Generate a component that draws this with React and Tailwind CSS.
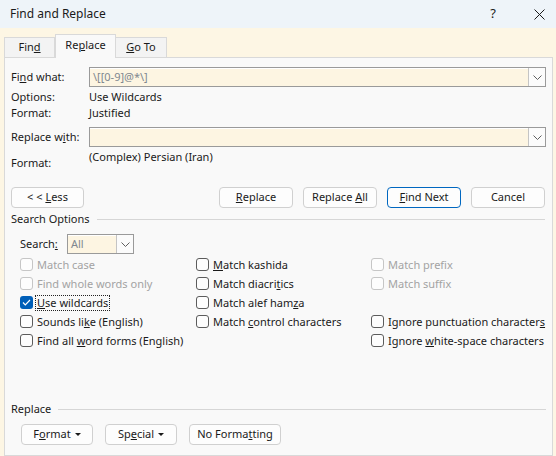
import React from 'react';

const font = { fontFamily: '"Noto Sans", "Open Sans", sans-serif' };

const Chevron = () => (
    <svg width="9" height="5" viewBox="0 0 9 5" fill="none">
        <polyline points="0.5,0.5 4.5,4.5 8.5,0.5" stroke="#5f5f5f" strokeWidth="1" />
    </svg>
);

const Caret = () => (
    <svg width="6" height="3" viewBox="0 0 6 3" className="ml-[4px]">
        <polygon points="0,0 6,0 3,3" fill="#1a1a1a" />
    </svg>
);

const ComboBox = ({ value, className = '' }) => (
    <div className={`flex h-[20px] border border-[#9a9a9a] bg-[#fdf5e2] ${className}`}>
        <div className="flex-1 flex items-center pl-[3px] text-[#808890] border-t border-t-white">{value}</div>
        <div className="w-[17px] h-full flex items-center justify-center bg-[#fbfbfb] border-l border-[#c4c4c4]">
            <Chevron />
        </div>
    </div>
);

const Btn = ({ children, w = 'w-[74px]', primary }) => (
    <div
        className={`${w} h-[21px] flex items-center justify-center rounded-[4px] bg-[#fdfdfd] border ${
            primary ? 'border-[#0067c0]' : 'border-[#d0d0d0]'
        }`}
    >
        {children}
    </div>
);

const Check = ({ children, disabled, checked, focus }) => (
    <div className={`flex items-center h-[19px] whitespace-nowrap ${disabled ? 'text-[#a3a3a3]' : ''}`}>
        {checked ? (
            <div className="w-[13px] h-[13px] shrink-0 rounded-[3px] bg-[#005fb8] flex items-center justify-center">
                <svg width="9" height="7" viewBox="0 0 9 7" fill="none">
                    <polyline points="1,3.5 3.3,5.8 8,1" stroke="white" strokeWidth="1.2" />
                </svg>
            </div>
        ) : (
            <div
                className={`w-[13px] h-[13px] shrink-0 rounded-[3px] bg-[#fdfdfd] border ${
                    disabled ? 'border-[#c6c6c6]' : 'border-[#5c5c5c]'
                }`}
            />
        )}
        <span className={`ml-[3px] px-px leading-[14px] ${focus ? 'outline-1 outline-dotted outline-[#222]' : ''}`}>
            {children}
        </span>
    </div>
);

const SectionHeader = ({ title }) => (
    <div className="flex items-center h-[16px]">
        <span>{title}</span>
        <div className="flex-1 h-px bg-[#d6d6d6] ml-[7px]" />
    </div>
);

export default function App() {
    return (
        <div style={font} className="w-[556px] h-[456px] flex flex-col overflow-hidden text-[11px] text-[#1a1a1a] bg-[#fdf6e4]">
            {/* Title bar */}
            <div className="h-[28px] flex items-center bg-[#eef4f9] pl-[10px] shrink-0">
                <span className="text-[12px]">Find and Replace</span>
                <span className="ml-auto text-[13px] mr-[38px]">?</span>
                <svg width="11" height="11" viewBox="0 0 11 11" className="mr-[11px]">
                    <path d="M0.5 0.5 L10.5 10.5 M10.5 0.5 L0.5 10.5" stroke="#1a1a1a" strokeWidth="1" />
                </svg>
            </div>

            <div className="flex-1 flex flex-col pt-[6px] pl-[4px] pr-[3px]">
                {/* Tabs */}
                <div className="flex items-end h-[23px] relative z-10">
                    <div className="w-[51px] h-[20px] flex items-center justify-center bg-[#f3f3f3] border border-[#d9d9d9] border-b-0">
                        <span>Fin<u>d</u></span>
                    </div>
                    <div className="w-[61px] h-[24px] -mb-px flex items-center justify-center bg-[#f9f9f9] border border-[#d9d9d9] border-b-0 pb-[2px]">
                        <span>Re<u>p</u>lace</span>
                    </div>
                    <div className="w-[51px] h-[20px] flex items-center justify-center bg-[#f3f3f3] border border-[#d9d9d9] border-b-0 border-l-0">
                        <span><u>G</u>o To</span>
                    </div>
                </div>

                {/* Panel */}
                <div className="flex-1 flex flex-col bg-[#f9f9f9] border border-[#d9d9d9] pl-[6px] pr-[6px]">
                    <div className="flex items-center mt-[9px]">
                        <span className="w-[78px]">Fi<u>n</u>d what:</span>
                        <ComboBox value="\[[0-9]@*\]" className="flex-1" />
                    </div>
                    <div className="flex items-center h-[16px] mt-[2px]">
                        <span className="w-[78px]">Options:</span>
                        <span>Use Wildcards</span>
                    </div>
                    <div className="flex items-center h-[16px]">
                        <span className="w-[78px]">Format:</span>
                        <span>Justified</span>
                    </div>

                    <div className="flex items-center mt-[6px]">
                        <span className="w-[78px]">Replace w<u>i</u>th:</span>
                        <ComboBox value="" className="flex-1" />
                    </div>
                    <div className="flex items-start">
                        <span className="w-[78px] mt-[8px] h-[16px] flex items-center">Format:</span>
                        <span className="mt-[2px] h-[16px] flex items-center">(Complex) Persian (Iran)</span>
                    </div>

                    {/* Buttons */}
                    <div className="flex items-center mt-[16px] pr-px gap-[10px]">
                        <Btn w="w-[73px]">
                            <span>&lt; &lt; <u>L</u>ess</span>
                        </Btn>
                        <div className="flex-1" />
                        <Btn>
                            <span><u>R</u>eplace</span>
                        </Btn>
                        <Btn>
                            <span>Replace <u>A</u>ll</span>
                        </Btn>
                        <Btn primary>
                            <span><u>F</u>ind Next</span>
                        </Btn>
                        <Btn>
                            <span>Cancel</span>
                        </Btn>
                    </div>

                    {/* Search options */}
                    <div className="mt-[3px] pr-[1px]">
                        <SectionHeader title="Search Options" />
                    </div>
                    <div className="flex items-center mt-[7px] pl-[9px]">
                        <span className="w-[47px]">Search<u>:</u></span>
                        <ComboBox value="All" className="w-[67px]" />
                    </div>

                    <div className="grid grid-cols-[176px_175px_1fr] mt-px pl-[9px]">
                        <div className="flex flex-col">
                            <Check disabled>Match case</Check>
                            <Check disabled>Find whole words only</Check>
                            <Check checked focus>
                                <u>U</u>se wildcards
                            </Check>
                            <Check>
                                Sounds li<u>k</u>e (English)
                            </Check>
                            <Check>
                                Find all <u>w</u>ord forms (English)
                            </Check>
                        </div>
                        <div className="flex flex-col">
                            <Check>
                                <u>M</u>atch kashida
                            </Check>
                            <Check>
                                Match diacri<u>t</u>ics
                            </Check>
                            <Check>
                                Match alef ham<u>z</u>a
                            </Check>
                            <Check>
                                Match <u>c</u>ontrol characters
                            </Check>
                        </div>
                        <div className="flex flex-col">
                            <Check disabled>Match prefix</Check>
                            <Check disabled>Match suffix</Check>
                            <div className="h-[19px]" />
                            <Check>
                                Ignore punctuation character<u>s</u>
                            </Check>
                            <Check>
                                Ignore <u>w</u>hite-space characters
                            </Check>
                        </div>
                    </div>

                    {/* Replace section */}
                    <div className="mt-[51px]">
                        <SectionHeader title="Replace" />
                    </div>
                    <div className="flex items-center mt-[7px] pl-[10px] gap-[12px]">
                        <Btn w="w-[72px]">
                            <span>F<u>o</u>rmat</span>
                            <Caret />
                        </Btn>
                        <Btn w="w-[72px]">
                            <span>Sp<u>e</u>cial</span>
                            <Caret />
                        </Btn>
                        <Btn w="w-[92px]">
                            <span>No Forma<u>t</u>ting</span>
                        </Btn>
                    </div>
                </div>
            </div>
        </div>
    );
}
